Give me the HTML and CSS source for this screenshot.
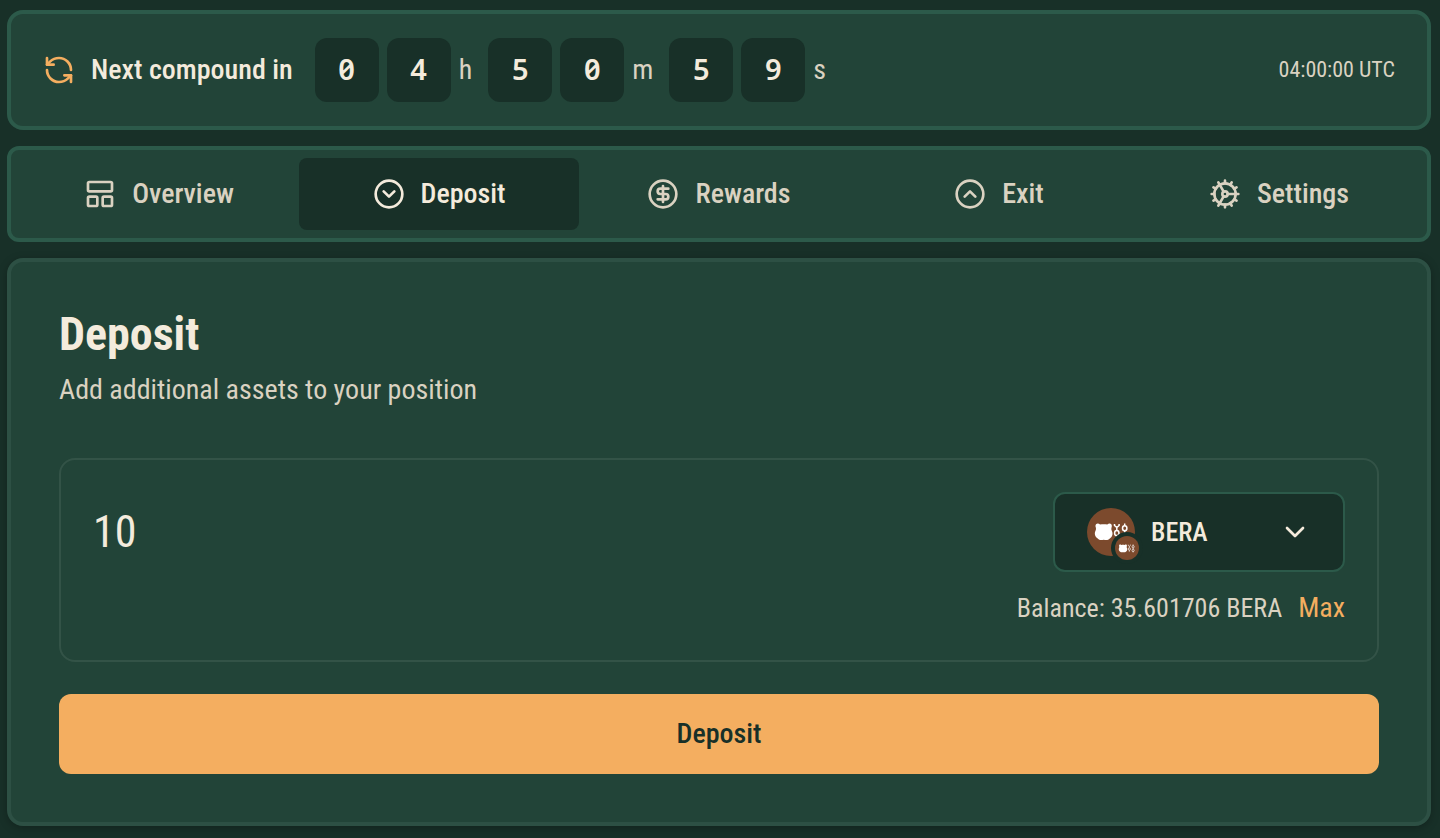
FILE: index.html
```html
<!DOCTYPE html>
<html lang="en">
<head>
<meta charset="utf-8">
<meta name="viewport" content="width=device-width, initial-scale=1">
<title>Deposit</title>
<link rel="stylesheet" href="styles.css">
</head>
<body>
<main class="page">
  <section class="card compound">
    <svg class="icon icon-accent" viewBox="0 0 24 24" aria-hidden="true"><path d="M21 12a9 9 0 0 0-9-9 9.75 9.75 0 0 0-6.74 2.74L3 8"/><path d="M3 3v5h5"/><path d="M3 12a9 9 0 0 0 9 9 9.75 9.75 0 0 0 6.74-2.74L21 16"/><path d="M16 16h5v5"/></svg>
    <span class="compound-label">Next compound in</span>
    <div class="timer">
      <div class="unit"><span class="digit">0</span><span class="digit">4</span><span>h</span></div>
      <div class="unit"><span class="digit">5</span><span class="digit">0</span><span>m</span></div>
      <div class="unit"><span class="digit">5</span><span class="digit">9</span><span>s</span></div>
    </div>
    <time class="utc">04:00:00 UTC</time>
  </section>

  <nav class="card tabs">
    <button class="tab" type="button"><svg class="icon" viewBox="0 0 24 24" aria-hidden="true"><rect x="3" y="3" width="18" height="7" rx="1"/><rect x="3" y="14" width="7" height="7" rx="1"/><rect x="14" y="14" width="7" height="7" rx="1"/></svg>Overview</button>
    <button class="tab tab-active" type="button" aria-current="page"><svg class="icon" viewBox="0 0 24 24" aria-hidden="true"><circle cx="12" cy="12" r="10"/><path d="m16 10-4 4-4-4"/></svg>Deposit</button>
    <button class="tab" type="button"><svg class="icon" viewBox="0 0 24 24" aria-hidden="true"><circle cx="12" cy="12" r="10"/><path d="M16 8h-6a2 2 0 1 0 0 4h4a2 2 0 1 1 0 4H8"/><path d="M12 18V6"/></svg>Rewards</button>
    <button class="tab" type="button"><svg class="icon" viewBox="0 0 24 24" aria-hidden="true"><circle cx="12" cy="12" r="10"/><path d="m8 14 4-4 4 4"/></svg>Exit</button>
    <button class="tab" type="button"><svg class="icon" viewBox="0 0 24 24" aria-hidden="true"><circle cx="12" cy="12" r="8"/><circle cx="12" cy="12" r="2"/><path d="M12 2v2M12 22v-2M17 20.66l-1-1.73M11 10.27 7 3.34M20.66 17l-1.73-1M3.34 7l1.73 1M14 12h8M2 12h2M20.66 7l-1.73 1M3.34 17l1.73-1M17 3.34l-1 1.73M11 13.73l-4 6.93"/></svg>Settings</button>
  </nav>

  <form class="card panel">
    <header class="panel-head">
      <h1 class="title">Deposit</h1>
      <p class="subtitle">Add additional assets to your position</p>
    </header>
    <div class="amount-box">
      <input class="amount" type="text" inputmode="decimal" value="10" aria-label="Amount">
      <div class="asset">
        <div class="token">
          <select class="token-select" aria-label="Asset"><option>BERA</option></select>
          <svg class="token-logo" viewBox="0 0 56 56" aria-hidden="true">
            <defs>
              <g id="bear">
                <path fill="#fff" d="M8.500 18.500C8 15.300 11.500 14.800 13 16.500C15.500 16 18 16 20.300 16.500C22 14.800 25.300 15.300 24.800 18.500C24.500 20 24 21 24.700 22.500C26.300 25.500 25.500 29 22.800 30.500C21 32.500 19 32 16.700 31.800C14.500 32 12.500 32.500 10.700 30.500C8 29 7 25.500 8.600 22.500C9.300 21 9 20 8.500 18.500Z"/>
                <g fill="none" stroke="#fff" stroke-width="1.500"><path d="M27.500 16v1.500l2.300 2 2.300-2V16M29.800 19.500v2.500"/><ellipse cx="29.800" cy="25" rx="2.200" ry="2.600"/><ellipse cx="37.700" cy="20.300" rx="2.200" ry="2.500"/><path d="M37.700 15.500v2.300M37.700 22.800v2.200"/><ellipse cx="37.700" cy="28" rx="2.200" ry="2.500"/><path d="M29.800 27.600v3M37.700 30.500v1.500"/></g>
              </g>
            </defs>
            <circle cx="24" cy="24" r="24" fill="#7c4a2d"/>
            <use href="#bear"/>
            <circle cx="40" cy="40" r="16" fill="#183028"/>
            <circle cx="40" cy="40" r="12" fill="#7c4a2d"/>
            <use href="#bear" transform="translate(28 29) scale(.48)"/>
          </svg>
          <svg class="icon chevron" viewBox="0 0 24 24" aria-hidden="true"><path d="m6 9 6 6 6-6"/></svg>
        </div>
        <div class="balance"><span class="balance-text">Balance: 35.601706 BERA</span><button class="max" type="button">Max</button></div>
      </div>
    </div>
    <button class="submit" type="button">Deposit</button>
  </form>
</main>
</body>
</html>
```
FILE: styles.css
```css
* {
  box-sizing: border-box;
}

body {
  margin: 0;
  min-height: 100vh;
  background: #183028;
  color: #f4ebdc;
  font: 400 28px/40px "Roboto Condensed", "Liberation Sans Narrow", Roboto, sans-serif;
}

button,
input,
select {
  border: 0;
  margin: 0;
  padding: 0;
  background: none;
  color: inherit;
  font: inherit;
}

button {
  cursor: pointer;
}

.page {
  display: flex;
  flex-direction: column;
  gap: 16px;
  padding: 10px 9px 12px 7px;
}

.card {
  border: 4px solid #2c5a4a;
  border-radius: 16px;
  background: #224438;
}

.icon {
  width: 32px;
  height: 32px;
  flex: none;
  fill: none;
  stroke: currentColor;
  stroke-width: 2;
  stroke-linecap: round;
  stroke-linejoin: round;
}

.icon-accent {
  color: #f4ae60;
}

.compound {
  display: flex;
  align-items: center;
  padding: 24px 32px;
}

.compound-label {
  margin: 0 22px 0 16px;
  font-weight: 500;
}

.timer,
.unit {
  display: flex;
  align-items: center;
}

.timer {
  gap: 16px;
  color: #dad2c1;
}

.unit {
  gap: 8px;
}

.digit {
  width: 64px;
  height: 64px;
  border-radius: 12px;
  background: #183028;
  color: #f4ebdc;
  font: 600 29px/62px "Noto Sans", sans-serif;
  font-variant-numeric: slashed-zero;
  text-align: center;
}

.utc {
  margin-left: auto;
  color: #dad2c1;
  font-size: 22px;
}

.tabs {
  display: grid;
  grid-template-columns: repeat(5, 1fr);
  padding: 8px;
  border-radius: 12px;
}

.tab {
  display: flex;
  align-items: center;
  justify-content: center;
  gap: 16px;
  height: 72px;
  border-radius: 8px;
  color: #dad2c1;
  font-weight: 500;
}

.tab-active {
  background: #183028;
  color: #f4ebdc;
}

.panel {
  display: flex;
  flex-direction: column;
  padding: 48px;
  border-color: #2d5044;
  box-shadow: 0 2px 8px rgba(0, 0, 0, 0.25);
}

.title {
  margin: 0 0 12px;
  font-size: 46px;
  font-weight: 700;
  line-height: 48px;
}

.subtitle {
  margin: 0;
  color: #dad2c1;
}

.amount-box {
  display: flex;
  align-items: flex-start;
  gap: 32px;
  margin: 48px 0 32px;
  padding: 32px;
  border: 2px solid #335347;
  border-radius: 16px;
}

.amount {
  flex: 1;
  min-width: 0;
  height: 80px;
  font-size: 44px;
  outline: 0;
}

.asset {
  display: flex;
  flex-direction: column;
  align-items: flex-end;
  gap: 16px;
}

.token {
  display: grid;
  align-items: center;
  width: 292px;
  height: 80px;
}

.token > * {
  grid-area: 1 / 1;
}

.token-select {
  width: 100%;
  height: 100%;
  padding-left: 96px;
  border: 2px solid #2c5a4a;
  border-radius: 12px;
  background: #183028;
  font-size: 26px;
  font-weight: 500;
  appearance: none;
}

.token-logo {
  width: 56px;
  height: 56px;
  margin: 8px 0 0 34px;
  pointer-events: none;
}

.chevron {
  justify-self: end;
  margin-right: 34px;
  pointer-events: none;
}

.balance {
  display: flex;
  align-items: baseline;
  gap: 16px;
  color: #dad2c1;
}

.balance-text {
  font-size: 26px;
}

.max {
  color: #f4ae60;
}

.submit {
  height: 80px;
  border-radius: 12px;
  background: #f4ae60;
  color: #183028;
  font-weight: 500;
}
```
